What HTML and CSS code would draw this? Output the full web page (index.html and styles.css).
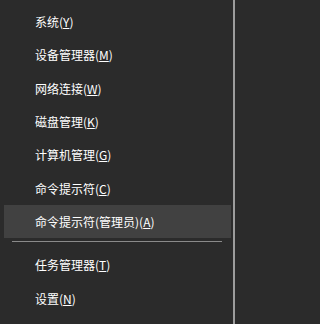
FILE: index.html
```html
<!DOCTYPE html>
<html lang="zh-CN">
<head>
<meta charset="utf-8">
<link rel="stylesheet" href="styles.css">
</head>
<body>
<div class="menu">
  <ul class="group">
    <li class="item">系统(<u>Y</u>)</li>
    <li class="item">设备管理器(<u>M</u>)</li>
    <li class="item">网络连接(<u>W</u>)</li>
    <li class="item">磁盘管理(<u>K</u>)</li>
    <li class="item">计算机管理(<u>G</u>)</li>
    <li class="item">命令提示符(<u>C</u>)</li>
    <li class="item active">命令提示符(管理员)(<u>A</u>)</li>
  </ul>
  <div class="sep"></div>
  <ul class="group">
    <li class="item">任务管理器(<u>T</u>)</li>
    <li class="item">设置(<u>N</u>)</li>
  </ul>
</div>
</body>
</html>
```
FILE: styles.css
```css
html, body {
  margin: 0;
  padding: 0;
  width: 235px;
  height: 324px;
  overflow: hidden;
  background: #2b2b2b;
}
.menu {
  box-sizing: border-box;
  width: 235px;
  height: 324px;
  background: #2b2b2b;
  border-right: 2px solid #9c9c9c;
  padding: 5px 0 0 0;
  font-family: "Noto Sans CJK SC", "Microsoft YaHei", sans-serif;
  font-size: 12px;
  color: #ffffff;
}
.group {
  list-style: none;
  margin: 0;
  padding: 0;
}
.item {
  height: 33.33px;
  line-height: 33.33px;
  margin: 0 2px 0 4px;
  padding-left: 31px;
  white-space: nowrap;
}
.item u {
  text-decoration: underline;
  text-underline-offset: 1px;
}
.item.active {
  background: #414141;
}
.sep {
  height: 10px;
  display: flex;
  align-items: flex-start;
  padding: 0 11px 0 12px;
  box-sizing: border-box;
}
.sep::before {
  content: "";
  display: block;
  flex: 1;
  margin-top: 3px;
  height: 1px;
  background: #8a8a8a;
}
```
